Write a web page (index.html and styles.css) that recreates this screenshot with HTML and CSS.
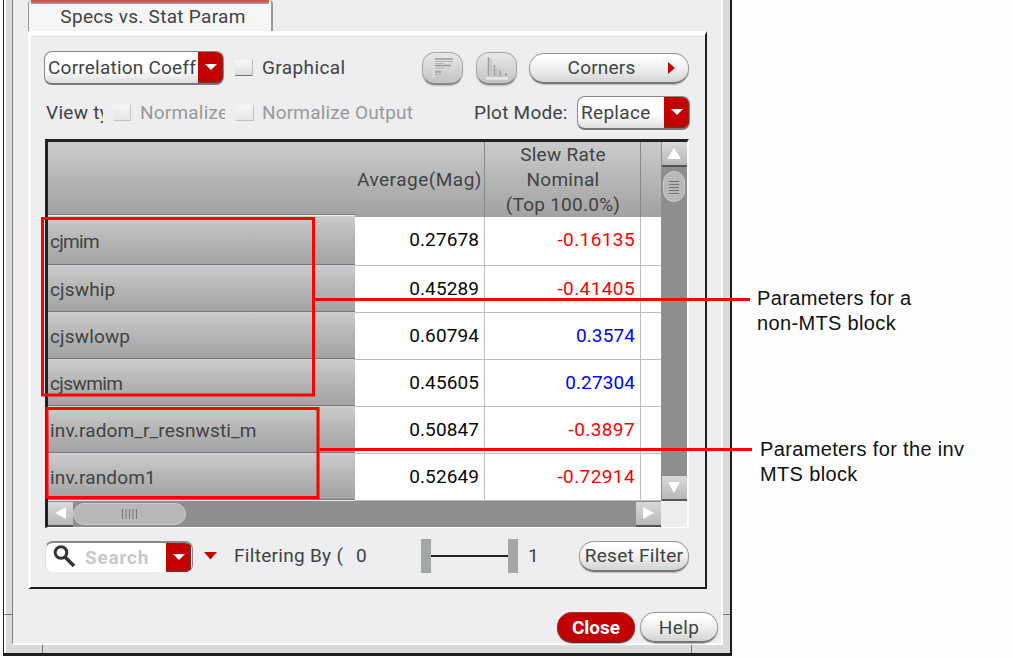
FILE: index.html
```html
<!DOCTYPE html>
<html lang="en">
<head>
<meta charset="utf-8">
<title>Specs vs. Stat Param</title>
<link rel="stylesheet" href="styles.css">
</head>
<body>
<div class="figure">
  <div class="window">
    <div class="content">
      <div class="tab"><div class="tab-stripe"></div><span class="t-tab">Specs vs. Stat Param</span></div>
      <div class="panel">
        <div class="row row-one">
          <div class="combo combo-corr"><span class="combo-text t-corr">Correlation Coeff</span><span class="drop"><svg width="12" height="7"><path d="M0 0H12L6 6Z" fill="#fff"/></svg></span></div>
          <span class="check"></span>
          <span class="label label-graph">Graphical</span>
          <button class="pill icon-btn"><svg width="22" height="24"><path d="M1.500 2V22" stroke="#ddd" stroke-width="2"/><path d="M3 3H21M3 9.500H19M3 16H9" stroke="#9c9c9c" stroke-width="1.500"/><path d="M3 5.500H21M3 7.500H12M3 12H12M3 18.500H9" stroke="#b5b5b5"/></svg></button>
          <button class="pill icon-btn icon-two"><svg width="22" height="24"><path d="M0 22.500H22" stroke="#ededed" stroke-width="2"/><path d="M2.500 1V20M8.500 9V20M14 14V20M20 17V20" stroke="#a0a0a0" stroke-width="1.500"/><path d="M5 3V20M11 12V20M16 17V20" stroke="#b8b8b8"/></svg></button>
          <button class="pill corners"><span>Corners</span><svg width="7" height="12"><path d="M0 0L7 6L0 12Z" fill="#c40000"/></svg></button>
        </div>
        <div class="row row-two">
          <span class="label label-view">View ty</span>
          <span class="check check-off"></span>
          <span class="label off label-norm">Normalize</span>
          <span class="check check-off check-second"></span>
          <span class="label off label-out">Normalize Output</span>
          <span class="label label-plot">Plot Mode:</span>
          <div class="combo combo-plot"><span class="combo-text">Replace</span><span class="drop"><svg width="12" height="7"><path d="M0 0H12L6 6Z" fill="#fff"/></svg></span></div>
        </div>
        <div class="table-box">
          <div class="grid">
            <div class="head head-first"></div>
            <div class="head head-avg">Average(Mag)</div>
            <div class="head head-slew"><span>Slew Rate</span><span>Nominal</span><span>(Top 100.0%)</span></div>
            <div class="head"></div>
            <div class="name">cjmim</div><div class="cell">0.27678</div><div class="cell neg">-0.16135</div><div class="cell"></div>
            <div class="name">cjswhip</div><div class="cell">0.45289</div><div class="cell neg">-0.41405</div><div class="cell"></div>
            <div class="name">cjswlowp</div><div class="cell">0.60794</div><div class="cell pos">0.3574</div><div class="cell"></div>
            <div class="name t-tight">cjswmim</div><div class="cell">0.45605</div><div class="cell pos">0.27304</div><div class="cell"></div>
            <div class="name">inv.radom_r_resnwsti_m</div><div class="cell">0.50847</div><div class="cell neg">-0.3897</div><div class="cell"></div>
            <div class="name">inv.random1</div><div class="cell">0.52649</div><div class="cell neg">-0.72914</div><div class="cell"></div>
          </div>
          <div class="vscroll">
            <span class="sbtn"><svg width="14" height="11"><path d="M7 0L14 11H0Z" fill="#fff"/></svg></span>
            <span class="vthumb"><svg width="10" height="14"><path d="M0 1.500H10M0 4.500H10M0 7.500H10M0 10.500H10M0 13.500H10" stroke="#777"/></svg></span>
            <span class="sbtn sbtn-down"><svg width="14" height="11"><path d="M7 11L13 0H1Z" fill="#fff"/></svg></span>
          </div>
          <div class="hscroll">
            <span class="sbtn"><svg width="11" height="14"><path d="M0 7L11 1V13Z" fill="#fff"/></svg></span>
            <span class="hthumb"><svg width="15" height="10"><path d="M.5 0V10M4 0V10M7.500 0V10M11 0V10M14.500 0V10" stroke="#777"/></svg></span>
            <span class="sbtn sbtn-right"><svg width="11" height="14"><path d="M11 7L0 1V13Z" fill="#fff"/></svg></span>
          </div>
        </div>
        <div class="row row-filter">
          <div class="search"><svg class="lens" width="24" height="24"><circle cx="8" cy="7.500" r="5.800" fill="none" stroke="#333" stroke-width="3"/><path d="M12 12L21 21" stroke="#333" stroke-width="3.500"/></svg><span class="hint">Search</span><span class="drop"><svg width="12" height="7"><path d="M0 0H12L6 6Z" fill="#fff"/></svg></span></div>
          <svg class="caret" width="13" height="8"><path d="M0 0H13L6.500 7.500Z" fill="#c40000"/></svg>
          <span class="label label-filter">Filtering By (</span>
          <span class="label label-zero">0</span>
          <div class="slider"><span></span><i></i><span></span></div>
          <span class="label label-one">1</span>
          <button class="pill reset">Reset Filter</button>
        </div>
      </div>
      <div class="actions">
        <button class="pill close">Close</button>
        <button class="pill help">Help</button>
      </div>
    </div>
  </div>
  <svg class="callouts" width="1013" height="658" fill="none" stroke="#f00" stroke-width="3">
    <rect x="42.500" y="218.500" width="271" height="176.500"/>
    <path d="M315 299.500H750"/>
    <rect x="47" y="408.500" width="271" height="89"/>
    <path d="M320 449.500H752"/>
  </svg>
  <div class="notes">
    <p class="note-a">Parameters for a<br>non-MTS block</p>
    <p class="note-b">Parameters for the inv<br>MTS block</p>
  </div>
</div>
</body>
</html>
```
FILE: styles.css
```css
* { box-sizing: border-box; }
body { margin: 0; background: #fdfdfd; font-family: Roboto, "Liberation Sans", sans-serif; font-size: 19px; color: #404343; }
.figure { position: relative; display: flex; width: 1013px; height: 658px; padding-left: 3px; overflow: hidden; }
.window {
  flex: none; width: 729px; height: 656px; padding: 0 7px 8px 8px;
  border: solid #1c1f1d; border-width: 0 2px 3px 1px;
  background:
    linear-gradient(#777, #777) 0 614px / 8px 1px no-repeat,
    linear-gradient(#777, #777) 100% 614px / 8px 1px no-repeat,
    linear-gradient(#777, #777) 38px 100% / 1px 9px no-repeat,
    linear-gradient(#777, #777) 687px 100% / 1px 9px no-repeat,
    linear-gradient(90deg, #fff 0 2px, transparent 2px),
    #dadada;
}
.content { width: 711px; height: 645px; padding-left: 15px; border: solid #fff; border-width: 0 2px 2px 0; border-left: 1px solid #808080; background: #eeeef0; }
.tab { width: 245px; height: 31px; border: 1px solid #999; border-width: 0 2px 0 1px; border-radius: 4px 4px 0 0; background: #f5f5f6; text-align: center; white-space: nowrap; overflow: hidden; letter-spacing: .3px; padding-left: 6px; }
.tab-stripe { height: 4px; margin: 0 2px 0 -4px; background: linear-gradient(#c65658 0 2px, #e08c8c 3px, #999 3px); }
.t-tab { display: block; line-height: 25px; }
.panel { width: 679px; height: 558px; padding: 16px 0 0 13px; border: solid #fff; border-width: 4px 2px 2px 3px; border-right-color: #1c1f1d; border-bottom-color: #1c1f1d; background: #eeeef0; }
.row { display: flex; align-items: center; white-space: nowrap; }
.row-one { height: 34px; }
.row-two { height: 34px; margin-top: 11px; }
.label { flex: none; overflow: hidden; line-height: 26px; }
.off { color: #999; }
.combo, .search { display: flex; flex: none; overflow: hidden; border: 1px solid #888; border-bottom: 2px solid #777; border-radius: 8px; background: linear-gradient(#fff 55%, #dedede); }
.combo { height: 34px; line-height: 31px; }
.combo-text { flex: 1; padding-left: 3px; overflow: hidden; letter-spacing: .3px; }
.t-corr { letter-spacing: .22px; }
.drop { display: flex; flex: none; width: 25px; align-items: center; justify-content: center; background: #c20000; box-shadow: inset -2px -2px 1px #8f2020; }
.combo-corr { width: 180px; }
.combo-plot { width: 113px; margin-left: 8px; }
.check { flex: none; width: 18px; height: 16px; margin-left: 11px; border-bottom: 1px solid #777; border-right: 1px solid #bbb; background: linear-gradient(#fafafa, #dcdcdc); }
.check-off { margin-left: 10px; border-color: #c4c4c4; background: linear-gradient(#f5f5f5, #e6e6e6); }
.check-second { margin-left: 11px; }
.label-graph { width: 160px; margin-left: 9px; letter-spacing: .4px; }
.label-view { width: 57px; margin-left: 2px; letter-spacing: .3px; }
.label-norm { width: 85px; margin-left: 9px; letter-spacing: .2px; }
.label-out { width: 152px; margin-left: 8px; letter-spacing: .18px; }
.label-plot { width: 95px; margin-left: 60px; letter-spacing: .25px; }
.pill { display: flex; flex: none; align-items: center; justify-content: center; height: 31px; padding: 0; border: 1px solid #999; border-bottom: 2px solid #777; border-radius: 15px; background: linear-gradient(#fff 10%, #eee 55%, #d3d3d3); color: #404343; font: inherit; white-space: nowrap; box-shadow: 0 1px 1px #bbb; }
.icon-btn { width: 41px; height: 33px; border-radius: 13px; border-color: #aaa #aaa #888; background: linear-gradient(#e9e9e9, #c3c3c3); }
.icon-two { margin-left: 13px; }
.corners { width: 160px; margin-left: 12px; letter-spacing: .2px; }
.corners span { margin: 0 33px 0 25px; }
.table-box { display: grid; grid-template: 359px 26px / 613px 26px; width: 644px; height: 389px; margin: 9px 0 0 1px; border: 3px solid #111; border-color: #222 #fff #fff #222; border-right-width: 2px; border-bottom-width: 1px; }
.grid { display: grid; grid-template-columns: 307px 130px 156px 20px; grid-template-rows: 75px 49px repeat(5, 47px); overflow: hidden; line-height: 25px; }
.head { display: flex; flex-direction: column; align-items: center; justify-content: center; background: linear-gradient(#ccc, #b6b6b6 50%, #a2a2a2); border-right: 1px solid #888; letter-spacing: .25px; white-space: nowrap; }
.head-avg { letter-spacing: .5px; }
.head-slew { padding-right: 0; }
.head-slew span { margin-left: 1px; }
.head-first { border-right: 0; border-bottom: 1px solid #828286; margin-bottom: 2px; }
.head:nth-child(4) { border-right: 0; }
.name { display: flex; align-items: center; margin-top: -1px; margin-bottom: 1px; padding: 1px 0 0 2px; background: linear-gradient(#cbcacd, #b5b5b5 50%, #a3a3a5); border-bottom: 1px solid #77777b; border-top: 1px solid #d0d0d2; letter-spacing: .15px; }
.t-tight { letter-spacing: -.6px; }
.name:nth-child(5) { letter-spacing: -.7px; }
.cell { padding: 10px 5px 0 0; background: #fff; border: solid #bdbdbd; border-width: 0 1px 1px 0; text-align: right; color: #080808; letter-spacing: .1px; }
.cell:nth-child(4n) { border-right: 0; }
.cell.neg { color: #f00; letter-spacing: .4px; }
.cell.pos { color: #00f; }
.vscroll, .hscroll { display: flex; align-items: center; background: #8e8e8e; }
.vscroll { flex-direction: column; }
.sbtn { display: flex; flex: none; width: 25px; height: 25px; align-items: center; justify-content: center; background: linear-gradient(#d9d9d9, #b8b8b8); border-bottom: 2px solid #555; }
.vthumb { display: flex; width: 22px; height: 31px; margin-top: 4px; align-items: center; justify-content: center; border: 1px solid #ccc; border-radius: 11px; background: #b8b8b8; }
.sbtn-down { margin-top: auto; }
.hthumb { display: flex; width: 113px; height: 22px; align-items: center; justify-content: center; border: 1px solid #ccc; border-radius: 11px; background: #b8b8b8; }
.sbtn-right { margin-left: auto; }
.row-filter { height: 34px; margin: 11px 0 0 1px; }
.search { width: 148px; height: 32px; margin-top: 2px; border-color: #888 #888 #eee #ddd; background: #fff; border-width: 2px 1px 1px 1px; line-height: 29px; }
.lens { margin: 2px 0 0 7px; }
.hint { width: 89px; padding-left: 8px; color: #c8c8c8; font-weight: 700; letter-spacing: .8px; }
.caret { flex: none; margin-left: 11px; }
.label-filter { width: 114px; margin-left: 17px; letter-spacing: .3px; }
.label-zero { width: 65px; margin-left: 8px; }
.slider { display: flex; align-items: center; width: 97px; height: 34px; }
.slider span { width: 10px; height: 34px; background: #a3a7a8; }
.slider i { flex: 1; height: 2px; background: #222; }
.label-one { width: 51px; margin-left: 10px; }
.reset { width: 110px; letter-spacing: .3px; }
.actions { display: flex; margin: 23px 0 0 529px; gap: 5px; }
.close { width: 78px; background: #c20000; border-color: #a33 #922 #722; color: #fff; font-weight: 700; }
.help { width: 78px; letter-spacing: .4px; }
.callouts { position: absolute; left: 0; top: 0; }
.notes { display: flex; flex-direction: column; padding: 286px 0 0 25px; font: 20px/25px "Liberation Sans", sans-serif; letter-spacing: .35px; color: #111; white-space: nowrap; }
.notes p { margin: 0; }
.notes .note-b { margin: 101px 0 0 3px; }
```
